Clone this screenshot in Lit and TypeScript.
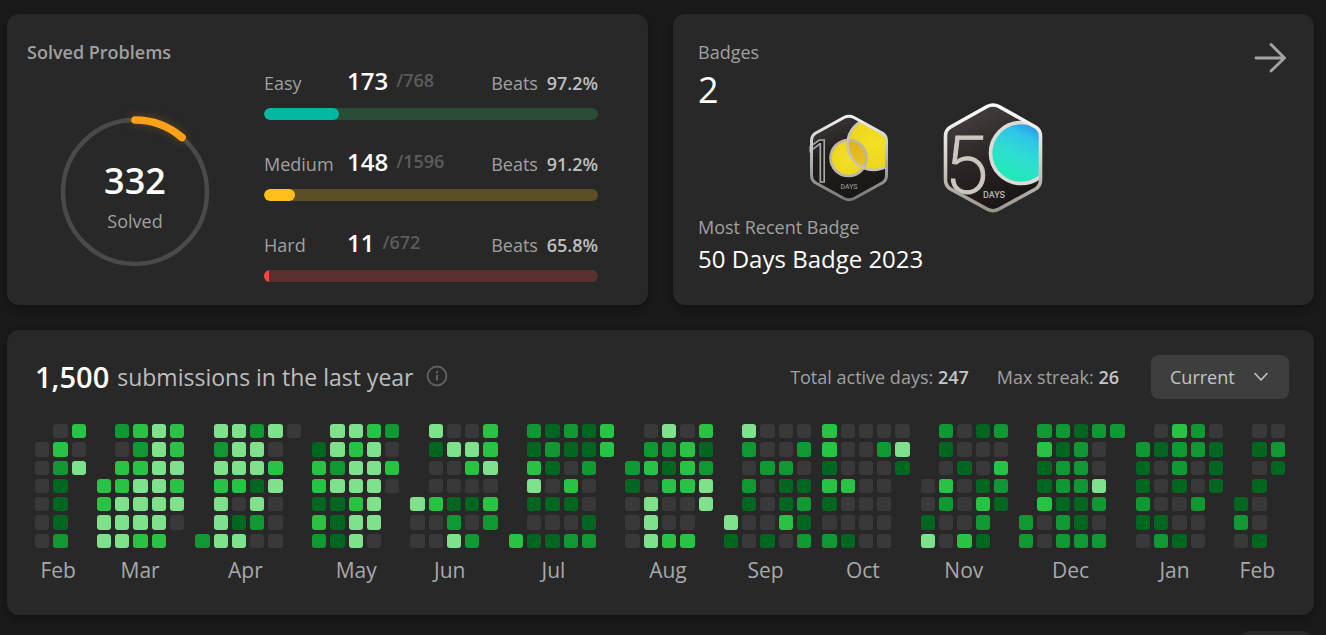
import { LitElement, html, svg, css } from "lit";
import { customElement, property } from "lit/decorators.js";

interface Level {
  name: string;
  kind: string;
  solved: number;
  total: number;
  beats: string;
}

interface Month {
  label: string;
  rows: string[];
}

const LEVELS: Level[] = [
  { name: "Easy", kind: "easy", solved: 173, total: 768, beats: "97.2%" },
  { name: "Medium", kind: "medium", solved: 148, total: 1596, beats: "91.2%" },
  { name: "Hard", kind: "hard", solved: 11, total: 672, beats: "65.8%" },
];

// One string per weekday; a digit is the activity level, a dot lies outside the month.
const MONTHS: Month[] = [
  { label: "Feb", rows: [".03", "030", "024", "01.", "01.", "01.", "02."] },
  { label: "Mar", rows: [".2343", ".0243", ".3344", "33443", "34444", "44440", "4433."] },
  { label: "Apr", rows: [".44240", ".2440.", ".4443.", ".3314.", ".4040.", ".4120.", "24400."] },
  { label: "May", rows: [".4432", "14340", "32443", "34440", "1134.", "3144.", "2140."] },
  { label: "Jun", rows: [".4003", ".1443", ".0034", ".0000", "43113", "00202", "0042."] },
  { label: "Jul", rows: [".21213", ".12113", ".3102.", ".4030.", ".1110.", ".0001.", "31122."] },
  { label: "Aug", rows: [".0403", ".2231", "23132", "10334", "04004", "0400.", "0433."] },
  { label: "Sep", rows: [".4000", ".2002", ".0220", ".2011", ".1012", "40031", "10102"] },
  { label: "Oct", rows: ["30000", "30024", "10001", "3300.", "1000.", "0000.", "2100."] },
  { label: "Nov", rows: [".2012", ".1000", ".0103", "03012", "02031", "1002.", "4031."] },
  { label: "Dec", rows: [".22122", ".3120.", ".1220.", ".1224.", ".3112.", "20210.", "20222."] },
  { label: "Jan", rows: [".0320", "21221", "10201", "10101", "2002.", "1100.", "0210."] },
  { label: "Feb", rows: [".00", ".12", ".01", ".1.", "10.", "20.", "01."] },
];

const cardStyles = css`
  :host {
    display: block;
    box-sizing: border-box;
    background: #282828;
    border-radius: 12px;
    box-shadow: 0 4px 10px rgba(0, 0, 0, 0.3);
  }
  * {
    box-sizing: border-box;
  }
  h2,
  p {
    margin: 0;
    font: inherit;
  }
`;

@customElement("solved-card")
export class SolvedCard extends LitElement {
  static styles = [
    cardStyles,
    css`
      :host {
        display: grid;
        grid-template-columns: 216px 1fr;
        column-gap: 21px;
        padding: 26px 50px 23px 20px;
      }
      .left {
        display: flex;
        flex-direction: column;
      }
      .title {
        color: #a0a0a0;
        font-weight: 600;
        font-size: 18px;
        line-height: 24px;
        white-space: nowrap;
      }
      .ring {
        display: grid;
        place-items: center;
        margin-top: 52px;
      }
      .ring > * {
        grid-area: 1 / 1;
      }
      .ring svg {
        display: block;
        width: 152px;
        height: 152px;
        overflow: visible;
      }
      .arc {
        filter: drop-shadow(0 0 5px rgba(255, 161, 22, 0.25));
      }
      .count {
        display: flex;
        flex-direction: column;
        align-items: center;
        padding-top: 14px;
      }
      .count b {
        color: #fff;
        font-weight: 600;
        font-size: 36px;
        line-height: 44px;
      }
      .count span {
        color: #a0a0a0;
        font-size: 18px;
        line-height: 36px;
      }
      .levels {
        display: flex;
        flex-direction: column;
        gap: 26px;
        padding-top: 25px;
      }
      .line {
        display: grid;
        grid-template-columns: 83px auto 1fr auto;
        align-items: baseline;
        height: 36px;
        line-height: 36px;
        font-size: 18px;
        color: #a0a0a0;
      }
      .solved {
        color: #fff;
        font-weight: 600;
        font-size: 24px;
        line-height: 32px;
      }
      .total {
        color: #5c5c5c;
        font-weight: 600;
        padding-left: 8px;
        line-height: 30px;
        align-self: start;
      }
      .beats b {
        color: #bfbfbf;
        font-weight: 600;
        padding-left: 4px;
      }
      .track {
        height: 12px;
        margin-top: 7px;
        border-radius: 6px;
        overflow: hidden;
      }
      .fill {
        height: 100%;
        border-radius: 6px;
      }
      .track.easy {
        background: #294d35;
      }
      .track.medium {
        background: #5e4e25;
      }
      .track.hard {
        background: #5a302f;
      }
      .easy .fill {
        background: #01b8a2;
      }
      .medium .fill {
        background: #ffc01e;
      }
      .hard .fill {
        background: #ef4743;
        border-radius: 0;
      }
    `,
  ];

  render() {
    return html`
      <div class="left">
        <h2 class="title">Solved Problems</h2>
        <div class="ring">
          <svg viewBox="-76 -76 152 152" aria-hidden="true">
            <circle r="72" fill="none" stroke="#4a4a4a" stroke-width="4.5" />
            <path class="arc" d="M0-72A72 72 0 0 1 47-54.5" fill="none" stroke="#ffa116" stroke-width="7.6" stroke-linecap="round" />
          </svg>
          <div class="count"><b>332</b><span>Solved</span></div>
        </div>
      </div>
      <div class="levels">
        ${LEVELS.map(
          (l) => html`
            <div>
              <div class="line">
                <span>${l.name}</span>
                <span class="solved">${l.solved}</span>
                <span class="total">/${l.total}</span>
                <span class="beats">Beats <b>${l.beats}</b></span>
              </div>
              <div class="track ${l.kind}">
                <div class="fill" style="width:${(l.solved / l.total) * 100}%"></div>
              </div>
            </div>
          `,
        )}
      </div>
    `;
  }
}

@customElement("badges-card")
export class BadgesCard extends LitElement {
  static styles = [
    cardStyles,
    css`
      :host {
        padding: 26px 25px 29px;
      }
      .head {
        display: flex;
        justify-content: space-between;
        align-items: flex-start;
        height: 63px;
      }
      .label {
        color: #a0a0a0;
        font-size: 18px;
        line-height: 24px;
      }
      .number {
        color: #fff;
        font-size: 36px;
        line-height: 52px;
      }
      .more {
        display: block;
        margin: 1px 2px 0 0;
      }
      .more svg,
      .shelf svg {
        display: block;
        overflow: visible;
      }
      .shelf {
        display: grid;
        grid-template-columns: repeat(3, 144px);
        justify-content: center;
        place-items: center;
        height: 110px;
        padding-right: 2px;
      }
      .recent {
        padding-top: 2px;
      }
      .name {
        color: #fff;
        font-size: 24px;
        line-height: 32px;
        padding-top: 4px;
      }
      .days {
        font-family: "Roboto", sans-serif;
        font-weight: 500;
      }
      .numeral {
        font-family: "Inter", sans-serif;
      }
    `,
  ];

  private small() {
    return svg`
      <defs>
        <linearGradient id="rimA" x1="0" y1="0" x2="0" y2="1">
          <stop offset="0" stop-color="#f2f2f2" />
          <stop offset="0.5" stop-color="#b5b5b5" />
          <stop offset="1" stop-color="#777" />
        </linearGradient>
        <linearGradient id="faceA" x1="0.2" y1="0" x2="0.6" y2="1">
          <stop offset="0" stop-color="#3f3b3a" />
          <stop offset="0.4" stop-color="#211e1d" />
          <stop offset="1" stop-color="#191716" />
        </linearGradient>
        <radialGradient id="gold" cx="0.5" cy="0.5" r="0.6">
          <stop offset="0" stop-color="#f3e124" />
          <stop offset="1" stop-color="#ecd31c" />
        </radialGradient>
        <linearGradient id="overlap" x1="0.2" y1="0" x2="0.6" y2="1">
          <stop offset="0" stop-color="#dfa020" />
          <stop offset="1" stop-color="#eacb20" />
        </linearGradient>
        <clipPath id="hexA"><path d="M34 3.5Q39 1 44 3.5L73 19.5Q76.5 22 76.5 27V61Q76.5 66 73 68.5L44 84.5Q39 87 34 84.5L5 68.5Q1.5 66 1.5 61V27Q1.5 22 5 19.5Z" /></clipPath>
        <clipPath id="lens"><circle cx="38.5" cy="44" r="18" /></clipPath>
      </defs>
      <path d="M34 3.5Q39 1 44 3.5L73 19.5Q76.5 22 76.5 27V61Q76.5 66 73 68.5L44 84.5Q39 87 34 84.5L5 68.5Q1.5 66 1.5 61V27Q1.5 22 5 19.5Z" fill="url(#faceA)" />
      <text class="numeral" x="-3" y="68" font-size="58" font-weight="300" fill="#242120" stroke="#a8a8a8" stroke-width="1.6">1</text>
      <g clip-path="url(#hexA)">
        <circle cx="38.5" cy="44" r="18" fill="url(#gold)" />
        <circle cx="63.5" cy="30" r="26" fill="url(#gold)" />
        <circle cx="63.5" cy="30" r="26" fill="url(#overlap)" clip-path="url(#lens)" />
        <circle cx="38.5" cy="44" r="18" fill="none" stroke="#b8b5ac" stroke-width="2.6" />
        <circle cx="63.5" cy="30" r="26" fill="none" stroke="#c6c3b8" stroke-width="2.6" />
      </g>
      <path d="M34 3.5Q39 1 44 3.5L73 19.5Q76.5 22 76.5 27V61Q76.5 66 73 68.5L44 84.5Q39 87 34 84.5L5 68.5Q1.5 66 1.5 61V27Q1.5 22 5 19.5Z" fill="none" stroke="url(#rimA)" stroke-width="3" />
      <text class="days" x="39" y="75" font-size="7" text-anchor="middle" fill="#8b8987">DAYS</text>
    `;
  }

  private large() {
    return svg`
      <defs>
        <linearGradient id="rimB" x1="0" y1="0" x2="0" y2="1">
          <stop offset="0" stop-color="#ffffff" />
          <stop offset="0.5" stop-color="#d6d3ce" />
          <stop offset="1" stop-color="#98948a" />
        </linearGradient>
        <linearGradient id="faceB" x1="0.2" y1="0" x2="0.6" y2="1">
          <stop offset="0" stop-color="#484342" />
          <stop offset="0.5" stop-color="#2b2625" />
          <stop offset="1" stop-color="#171413" />
        </linearGradient>
        <linearGradient id="sea" x1="0.85" y1="0" x2="0.35" y2="1">
          <stop offset="0" stop-color="#2f7fe8" />
          <stop offset="0.3" stop-color="#2ec6e8" />
          <stop offset="0.6" stop-color="#2fded0" />
          <stop offset="1" stop-color="#1feab4" />
        </linearGradient>
        <clipPath id="hexB"><path d="M43 3.5Q49 0.5 55 3.5L91.5 24Q96.5 27 96.5 33V77Q96.5 83 91.5 86L55 106Q49 109.5 43 106L6.5 86Q1.5 83 1.5 77V33Q1.5 27 6.5 24Z" /></clipPath>
      </defs>
      <path d="M43 3.5Q49 0.5 55 3.5L91.5 24Q96.5 27 96.5 33V77Q96.5 83 91.5 86L55 106Q49 109.5 43 106L6.5 86Q1.5 83 1.5 77V33Q1.5 27 6.5 24Z" fill="url(#faceB)" />
      <text class="numeral" x="1" y="90" font-size="78" font-weight="200" fill="#cbc8c2" stroke="#cbc8c2" stroke-width="1">5</text>
      <g clip-path="url(#hexB)">
        <circle cx="77" cy="50" r="30.5" fill="url(#sea)" stroke="#dedbd6" stroke-width="3.6" />
      </g>
      <path d="M43 3.5Q49 0.5 55 3.5L91.5 24Q96.5 27 96.5 33V77Q96.5 83 91.5 86L55 106Q49 109.5 43 106L6.5 86Q1.5 83 1.5 77V33Q1.5 27 6.5 24Z" fill="none" stroke="url(#rimB)" stroke-width="3.6" />
      <text class="days" x="50" y="95" font-size="9" text-anchor="middle" fill="#b8b4ad">DAYS</text>
    `;
  }

  render() {
    return html`
      <div class="head">
        <div>
          <h2 class="label">Badges</h2>
          <p class="number">2</p>
        </div>
        <a class="more" href="#badges" aria-label="All badges">
          <svg width="34" height="34" viewBox="0 0 34 34" fill="none" stroke="#a3a3a3" stroke-width="2.9" stroke-linecap="round" stroke-linejoin="round" aria-hidden="true">
            <path d="M3 17H31.5M18 3.500L31.5 17L18 30" />
          </svg>
        </a>
      </div>
      <div class="shelf">
        <svg width="78" height="88" viewBox="0 0 78 88" role="img" aria-label="100 Days Badge">${this.small()}</svg>
        <svg width="98" height="110" viewBox="0 0 98 110" role="img" aria-label="50 Days Badge">${this.large()}</svg>
      </div>
      <p class="label recent">Most Recent Badge</p>
      <p class="name">50 Days Badge 2023</p>
    `;
  }
}

@customElement("month-grid")
export class MonthGrid extends LitElement {
  @property({ attribute: false }) month!: Month;

  static styles = css`
    :host {
      display: block;
      min-width: 0;
    }
    .days {
      display: grid;
      gap: 4px;
    }
    .day {
      aspect-ratio: 1;
      border-radius: 3px;
    }
    .l0 {
      background: #393939;
    }
    .l1 {
      background: #016620;
    }
    .l2 {
      background: #109932;
    }
    .l3 {
      background: #28c244;
    }
    .l4 {
      background: #7fe18b;
    }
    .label {
      width: 40px;
      margin: 6px auto 0;
      color: #a6a8ab;
      font-size: 21px;
      line-height: 32px;
      white-space: nowrap;
    }
  `;

  render() {
    const { label, rows } = this.month;
    return html`
      <div class="days" style="grid-template-columns:repeat(${rows[0].length},1fr)">
        ${rows.map((row) => [...row].map((c) => html`<div class="day ${c === "." ? "" : "l" + c}"></div>`))}
      </div>
      <div class="label">${label}</div>
    `;
  }
}

@customElement("activity-card")
export class ActivityCard extends LitElement {
  static styles = [
    cardStyles,
    css`
      :host {
        padding: 25px 25px 29px 28px;
      }
      .bar {
        display: flex;
        align-items: center;
        height: 44px;
      }
      .title {
        display: flex;
        align-items: center;
        flex: 1;
        white-space: nowrap;
        color: #bdbdbd;
        font-size: 23px;
        line-height: 36px;
      }
      .title b {
        color: #fff;
        font-weight: 600;
        font-size: 29px;
        margin-right: 8px;
      }
      .title svg {
        margin: 0 0 3px 13px;
      }
      .stat {
        color: #a0a0a0;
        font-size: 18px;
        white-space: nowrap;
        margin-right: 28px;
      }
      .stat b {
        color: #c6c6c6;
        font-weight: 600;
      }
      .picker {
        display: grid;
        align-items: center;
        margin-left: 4px;
      }
      .picker > * {
        grid-area: 1 / 1;
      }
      select {
        appearance: none;
        width: 138px;
        height: 44px;
        padding: 0 48px 0 19px;
        border: 0;
        border-radius: 8px;
        background: #3e3e3e;
        color: #c4c4c4;
        font-family: inherit;
        font-size: 18px;
      }
      .picker svg {
        justify-self: end;
        margin-right: 20px;
        pointer-events: none;
      }
      .months {
        display: flex;
        gap: 11px;
        padding: 25px 4px 0 0;
      }
    `,
  ];

  render() {
    return html`
      <div class="bar">
        <h2 class="title">
          <b>1,500</b> submissions in the last year
          <svg width="22" height="22" viewBox="0 0 22 22" fill="none" stroke="#5f5f5f" stroke-width="2" aria-hidden="true">
            <circle cx="11" cy="11" r="9.4" />
            <path d="M11 10V15.5M11 6V8.2" />
          </svg>
        </h2>
        <div class="stat">Total active days: <b>247</b></div>
        <div class="stat">Max streak: <b>26</b></div>
        <div class="picker">
          <select aria-label="Period">
            <option>Current</option>
            <option>2023</option>
          </select>
          <svg width="16" height="16" viewBox="0 0 16 16" fill="none" stroke="#c4c4c4" stroke-width="1.6" stroke-linecap="round" stroke-linejoin="round" aria-hidden="true">
            <path d="M2 4.5L8 11L14 4.5" />
          </svg>
        </div>
      </div>
      <div class="months">
        ${MONTHS.map((m) => {
          const n = m.rows[0].length;
          return html`<month-grid .month=${m} style="flex:${n} 1 ${(n - 1) * 4}px"></month-grid>`;
        })}
      </div>
    `;
  }
}

@customElement("app-root")
export class AppRoot extends LitElement {
  static styles = css`
    :host {
      display: block;
      box-sizing: border-box;
      height: 100vh;
      overflow: hidden;
      padding: 14px 12px 0 7px;
      background: #1a1a1a;
      font-family: "Open Sans", "Noto Sans", sans-serif;
    }
    .top {
      display: grid;
      grid-template-columns: 1fr 1fr;
      gap: 25px;
      margin-bottom: 25px;
    }
    .next {
      display: flex;
      justify-content: flex-end;
      margin-top: 16px;
    }
    .tab {
      width: 76px;
      height: 40px;
      border-radius: 12px;
      background: #282828;
    }
  `;

  render() {
    return html`
      <div class="top">
        <solved-card></solved-card>
        <badges-card></badges-card>
      </div>
      <activity-card></activity-card>
      <div class="next"><div class="tab"></div></div>
    `;
  }
}
